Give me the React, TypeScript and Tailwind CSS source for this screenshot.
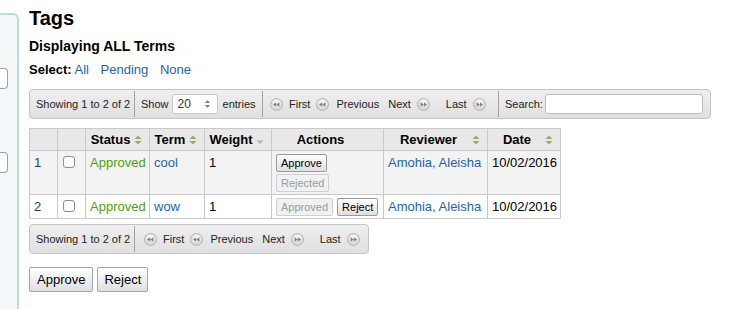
import React from "react";

const LINK = "text-[#1f63b4]";

function PagIcon({ dir, className = "" }: { dir: "l" | "r"; className?: string }) {
  return (
    <svg width="13" height="13" viewBox="0 0 13 13" className={"shrink-0 " + className}>
      <defs>
        <radialGradient id={"pg" + dir} cx="50%" cy="35%" r="65%">
          <stop offset="0%" stopColor="#ffffff" />
          <stop offset="100%" stopColor="#cfcfcf" />
        </radialGradient>
      </defs>
      <circle cx="6.5" cy="6.5" r="6" fill={"url(#pg" + dir + ")"} stroke="#b3b3b3" />
      {dir === "l" ? (
        <>
          <polygon points="3,6.5 6.2,4.2 6.2,8.8" fill="#808080" />
          <polygon points="6.2,6.5 9.4,4.2 9.4,8.8" fill="#808080" />
        </>
      ) : (
        <>
          <polygon points="10,6.5 6.8,4.2 6.8,8.8" fill="#808080" />
          <polygon points="6.8,6.5 3.6,4.2 3.6,8.8" fill="#808080" />
        </>
      )}
    </svg>
  );
}

function Sep() {
  return <div className="my-[1px] w-px shrink-0 bg-[#a2a2a2]" />;
}

function Pager({ pl }: { pl: string }) {
  return (
    <div className={"flex shrink-0 items-center whitespace-nowrap pr-[7px] " + pl}>
      <PagIcon dir="l" />
      <span className="ml-[6px]">First</span>
      <PagIcon dir="l" className="ml-[6px]" />
      <span className="ml-[7px]">Previous</span>
      <span className="ml-[9px]">Next</span>
      <PagIcon dir="r" className="ml-[6px]" />
      <span className="ml-[16px]">Last</span>
      <PagIcon dir="r" className="ml-[6px]" />
    </div>
  );
}

function SortBoth() {
  return (
    <svg width="8" height="10" viewBox="0 0 8 10" className="absolute right-[7px] top-1/2 -translate-y-1/2">
      <polygon points="4,0.5 7.5,4 0.5,4" fill="#a2a66c" />
      <polygon points="0.5,6 7.5,6 4,9.5" fill="#a2a66c" />
    </svg>
  );
}

function SortDown() {
  return (
    <svg width="8" height="10" viewBox="0 0 8 10" className="absolute right-[7px] top-1/2 -translate-y-1/2">
      <polygon points="0.5,5.5 7.5,5.5 4,9" fill="#b4b69c" />
    </svg>
  );
}

function Btn({ children, disabled = false }: { children: React.ReactNode; disabled?: boolean }) {
  return (
    <div
      className={
        "flex h-[18px] items-center whitespace-nowrap rounded-[2px] border px-[4px] text-[11px] leading-[13px] " +
        (disabled
          ? "border-[#cfcfcf] bg-[#f1f1f1] text-[#9a9a9a]"
          : "border-[#9a9a9a] bg-gradient-to-b from-[#ffffff] to-[#dedede] text-black")
      }
    >
      {children}
    </div>
  );
}

function Checkbox() {
  return <div className="mt-[1px] h-[12px] w-[12px] rounded-[3px] border border-[#8e8e8e] bg-white" />;
}

const th = "relative border border-[#c9c9c9] pl-[4px] pr-[18px] py-[3px] text-center font-bold leading-[15px]";
const td = "border border-[#c9c9c9] px-[4px] pt-[4px] pb-[3px] align-top leading-[15px]";

export default function App() {
  return (
    <div className="flex min-h-[309px] bg-white text-black" style={{ fontFamily: "'Liberation Sans', Arial, sans-serif" }}>
      <div className="mt-[13px] h-[296px] w-[19px] shrink-0 rounded-tr-[6px] border-r-2 border-t-2 border-[#bcdbdb] bg-[#f3f7f7]">
        <div className="mt-[53px] h-[21px] w-[8px] rounded-r-[4px] border border-l-0 border-[#a0a0a0] bg-white" />
        <div className="mt-[63px] h-[21px] w-[8px] rounded-r-[4px] border border-l-0 border-[#a0a0a0] bg-white" />
      </div>

      <div className="ml-[10px] flex flex-col items-start">
        <h1 className="mt-[7px] text-[20px] font-bold leading-[23px]">Tags</h1>
        <h3 className="mt-[8px] text-[14px] font-bold leading-[16px]">Displaying ALL Terms</h3>
        <div className="mt-[8px] text-[13px] leading-[15px]">
          <span className="font-bold">Select:</span> <span className={LINK}>All</span>
          <span className={"ml-[8px] " + LINK}> Pending</span>
          <span className={"ml-[8px] " + LINK}> None</span>
        </div>

        <div className="mt-[12px] flex h-[30px] w-[682px] items-stretch whitespace-nowrap rounded-[4px] border border-[#c4c4c4] bg-gradient-to-b from-[#efefef] to-[#e0e0e0] text-[11px] text-[#222]">
          <div className="flex w-[104px] shrink-0 items-center pl-[6px]">Showing 1 to 2 of 2</div>
          <Sep />
          <div className="flex w-[127px] shrink-0 items-center pl-[6px]">
            <span>Show</span>
            <div className="ml-[3px] flex h-[20px] w-[46px] items-center justify-between rounded-[3px] border border-[#c8c8c8] bg-white pl-[5px] pr-[6px] text-[12px] text-[#333]">
              <span>20</span>
              <svg width="7" height="12" viewBox="0 0 7 12">
                <polygon points="0.8,5 3.5,2.2 6.2,5" fill="#777" />
                <polygon points="0.8,7 6.2,7 3.5,9.8" fill="#777" />
              </svg>
            </div>
            <span className="ml-[5px]">entries</span>
          </div>
          <Sep />
          <div className="flex w-[235px] shrink-0">
            <Pager pl="pl-[7px]" />
          </div>
          <Sep />
          <div className="flex flex-1 items-center pl-[6px] pr-[7px]">
            <span>Search:</span>
            <div className="ml-[2px] h-[20px] flex-1 rounded-[3px] border border-[#bdbdbd] bg-white" />
          </div>
        </div>

        <table className="mt-[9px] w-[531px] table-fixed border-collapse text-[13px]">
          <colgroup>
            <col className="w-[28px]" />
            <col className="w-[28px]" />
            <col className="w-[64px]" />
            <col className="w-[55px]" />
            <col className="w-[67px]" />
            <col className="w-[112px]" />
            <col className="w-[104px]" />
            <col className="w-[73px]" />
          </colgroup>
          <thead>
            <tr className="bg-[#e8e8e8]">
              <th className={th}></th>
              <th className={th}></th>
              <th className={th}>
                Status
                <SortBoth />
              </th>
              <th className={th}>
                Term
                <SortBoth />
              </th>
              <th className={th}>
                Weight
                <SortDown />
              </th>
              <th className={th}>Actions</th>
              <th className={th}>
                Reviewer
                <SortBoth />
              </th>
              <th className={th}>
                Date
                <SortBoth />
              </th>
            </tr>
          </thead>
          <tbody>
            <tr className="bg-[#f3f3f3]">
              <td className={td + " text-[#1a3f7a]"}>1</td>
              <td className={td + " pl-[5px]"}>
                <Checkbox />
              </td>
              <td className={td + " text-[#4f9f12]"}>Approved</td>
              <td className={td + " " + LINK}>cool</td>
              <td className={td}>1</td>
              <td className="border border-[#c9c9c9] pl-[4px] pr-[2px] pt-[3px] pb-[2px] align-top">
                <div className="flex flex-col items-start gap-[2px]">
                  <Btn>Approve</Btn>
                  <Btn disabled>Rejected</Btn>
                </div>
              </td>
              <td className={td + " whitespace-nowrap " + LINK}>Amohia, Aleisha</td>
              <td className={td}>10/02/2016</td>
            </tr>
            <tr className="bg-white">
              <td className={td + " text-[#1a3f7a]"}>2</td>
              <td className={td + " pl-[5px]"}>
                <Checkbox />
              </td>
              <td className={td + " text-[#4f9f12]"}>Approved</td>
              <td className={td + " " + LINK}>wow</td>
              <td className={td}>1</td>
              <td className="border border-[#c9c9c9] pl-[4px] pr-[2px] pt-[3px] pb-[2px] align-top">
                <div className="flex items-start gap-[4px]">
                  <Btn disabled>Approved</Btn>
                  <Btn>Reject</Btn>
                </div>
              </td>
              <td className={td + " whitespace-nowrap " + LINK}>Amohia, Aleisha</td>
              <td className={td}>10/02/2016</td>
            </tr>
          </tbody>
        </table>

        <div className="mt-[5px] flex h-[30px] w-[340px] items-stretch whitespace-nowrap rounded-[4px] border border-[#c4c4c4] bg-gradient-to-b from-[#efefef] to-[#e0e0e0] text-[11px] text-[#222]">
          <div className="flex w-[104px] shrink-0 items-center pl-[6px]">Showing 1 to 2 of 2</div>
          <Sep />
          <Pager pl="pl-[9px]" />
        </div>

        <div className="mt-[13px] flex gap-[4px] text-[13px]">
          <div className="flex h-[25px] items-center rounded-[2px] border border-[#a6a6a6] bg-gradient-to-b from-[#ffffff] to-[#dfdfdf] px-[7px]">
            Approve
          </div>
          <div className="flex h-[25px] items-center rounded-[2px] border border-[#a6a6a6] bg-gradient-to-b from-[#ffffff] to-[#dfdfdf] px-[6px]">
            Reject
          </div>
        </div>
      </div>
    </div>
  );
}
